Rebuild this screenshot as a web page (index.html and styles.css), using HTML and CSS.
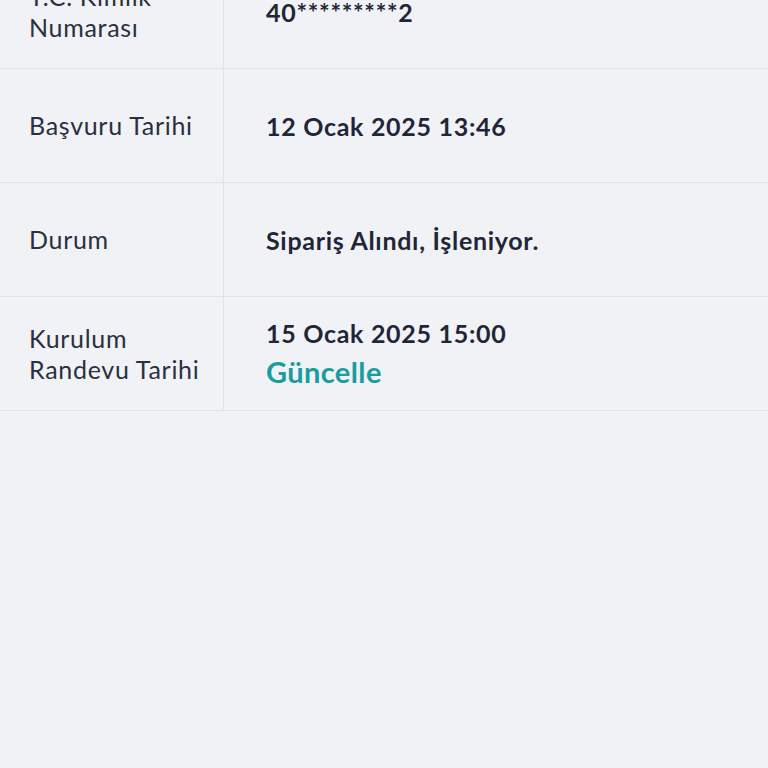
FILE: index.html
```html
<!DOCTYPE html>
<html lang="tr">
<head>
<meta charset="utf-8">
<link rel="stylesheet" href="styles.css">
</head>
<body>
<div class="table">
  <div class="row">
    <div class="label">T.C. Kimlik<br>Numarası</div>
    <div class="value"><span class="strong">40*********2</span></div>
  </div>
  <div class="row">
    <div class="label">Başvuru Tarihi</div>
    <div class="value"><span class="strong">12 Ocak 2025 13:46</span></div>
  </div>
  <div class="row">
    <div class="label">Durum</div>
    <div class="value"><span class="strong">Sipariş Alındı, İşleniyor.</span></div>
  </div>
  <div class="row">
    <div class="label">Kurulum<br>Randevu Tarihi</div>
    <div class="value">
      <span class="strong">15 Ocak 2025 15:00</span>
      <a class="link" href="#">Güncelle</a>
    </div>
  </div>
</div>
</body>
</html>
```
FILE: styles.css
```css
html, body {
  margin: 0;
  padding: 0;
  background: #f0f2f6;
  width: 768px;
  height: 768px;
  overflow: hidden;
}
body {
  font-family: Lato, "Noto Sans", sans-serif;
  color: #1f2637;
}
.table {
  margin-top: -45px;
}
.row {
  display: grid;
  grid-template-columns: 224px 1fr;
  height: 113px;
  border-bottom: 1px solid #dfe2e7;
}
.label {
  border-right: 1px solid #dfe2e7;
  padding-left: 29px;
  display: flex;
  align-items: center;
  font-size: 25px;
  line-height: 31px;
  letter-spacing: 0.7px;
  color: #2a3040;
}
.value {
  padding-left: 42px;
  display: flex;
  flex-direction: column;
  justify-content: center;
}
.strong {
  font-weight: 700;
  font-size: 25px;
  line-height: 30px;
  letter-spacing: 0.7px;
  color: #1f2637;
}
.link {
  margin-top: 6px;
  font-weight: 700;
  font-size: 29px;
  line-height: 36px;
  letter-spacing: 0.4px;
  color: #1a9ca1;
  text-decoration: none;
}
```
